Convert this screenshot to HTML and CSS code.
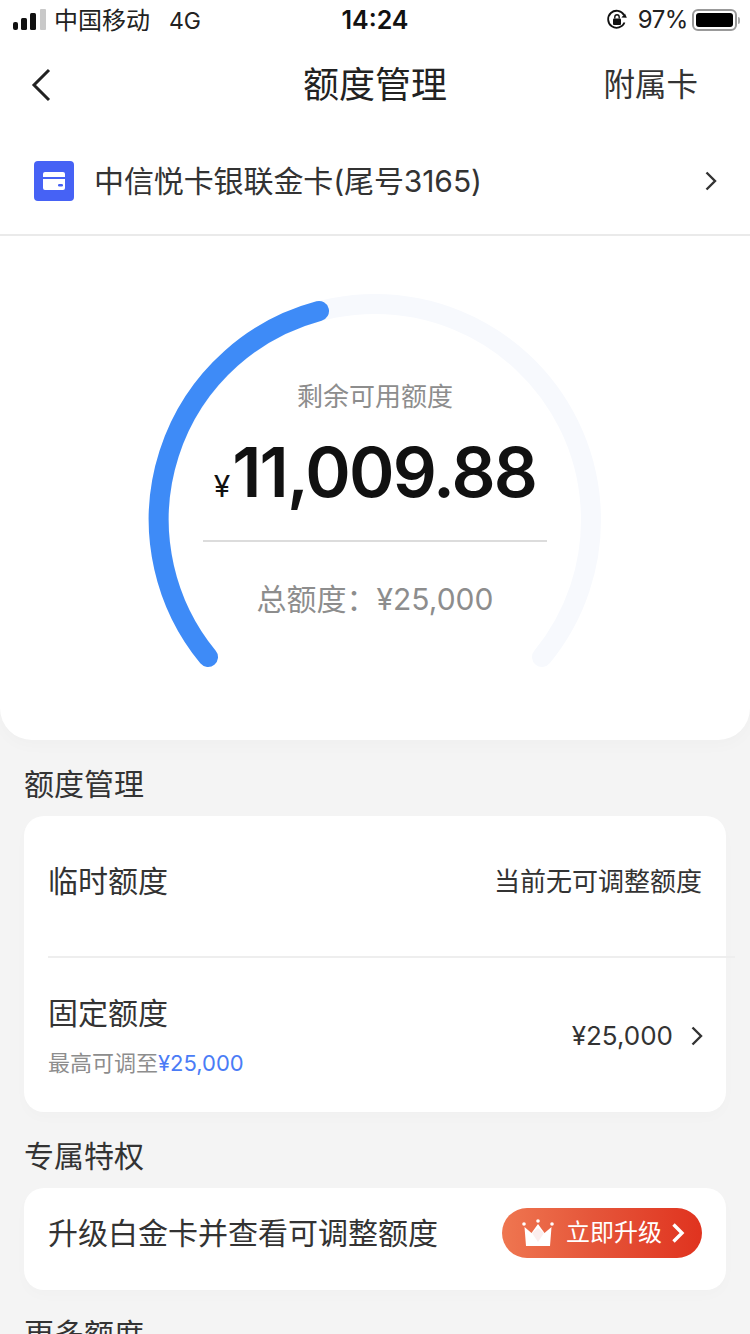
FILE: index.html
```html
<!DOCTYPE html>
<html lang="zh-CN">
<head>
<meta charset="utf-8">
<title>额度管理</title>
<link rel="stylesheet" href="styles.css">
</head>
<body>
<div class="page">
  <section class="hero">
    <div class="status">
      <div class="status-left">
        <svg class="signal" width="34" height="22" viewBox="0 0 34 22"><rect x="1" y="13" width="5" height="8" rx="2" fill="#111"/><rect x="9" y="9" width="6" height="12" rx="1.500" fill="#111"/><rect x="18" y="4" width="6" height="17" rx="1.500" fill="#111"/><rect x="28" y="0" width="6" height="21" rx="1" fill="#c9c9c9"/></svg>
        <span class="carrier">中国移动</span>
        <span class="net">4G</span>
      </div>
      <div class="time">14:24</div>
      <div class="status-right">
        <svg class="lock" width="22" height="22" viewBox="0 0 22 22"><path d="M18.500 13.500A8.500 8.500 0 1 1 18 6" fill="none" stroke="#111" stroke-width="1.800"/><path d="M20.800 8.800l-5.400-.2 3.600-4z" fill="#111"/><rect x="7" y="9.500" width="8" height="6.500" rx="1" fill="#111"/><path d="M8.800 9.500V8a2.200 2.200 0 0 1 4.400 0v1.500" fill="none" stroke="#111" stroke-width="1.400"/></svg>
        <span class="pct">97%</span>
        <span class="battery"><span class="battery-fill"></span></span>
        <span class="battery-cap"></span>
      </div>
    </div>

    <nav class="nav">
      <svg class="back" width="22" height="36" viewBox="0 0 22 36"><path d="M19 3L4 18l15 15" fill="none" stroke="#222" stroke-width="3"/></svg>
      <h1 class="nav-title">额度管理</h1>
      <span class="nav-link">附属卡</span>
    </nav>

    <div class="card-row">
      <svg class="card-icon" width="40" height="40" viewBox="0 0 40 40"><rect width="40" height="40" rx="4" fill="#4662f5"/><path d="M9 13a2 2 0 0 1 2-2h18a2 2 0 0 1 2 2v3H9zM9 18h22v9a2 2 0 0 1-2 2H11a2 2 0 0 1-2-2z" fill="#fff"/><rect x="24" y="23" width="5" height="2.500" rx="1.200" fill="#4662f5"/></svg>
      <span class="card-name">中信悦卡银联金卡(尾号3165)</span>
      <svg class="chev" width="14" height="22" viewBox="0 0 14 22"><path d="M2.500 2.500L11 11l-8.500 8.500" fill="none" stroke="#333" stroke-width="2.400"/></svg>
    </div>

    <div class="gauge">
      <svg class="ring" width="472" height="420" viewBox="0 0 472 420"><path d="M69 367A216 216 0 1 1 403 367" fill="none" stroke="#f7f9fd" stroke-width="20" stroke-linecap="round"/><path d="M69 367A216 216 0 0 1 180 21" fill="none" stroke="#3e8bf7" stroke-width="20" stroke-linecap="round"/></svg>
      <div class="gauge-label">剩余可用额度</div>
      <div class="amount"><span class="amount-sign">¥</span><span class="amount-value">11,009.88</span></div>
      <div class="gauge-rule"></div>
      <div class="gauge-total">总额度：¥25,000</div>
    </div>
  </section>

  <section class="group">
    <h2 class="group-title">额度管理</h2>
    <div class="panel">
      <div class="row row-temp">
        <span class="row-name">临时额度</span>
        <span class="row-note">当前无可调整额度</span>
      </div>
      <div class="row-rule"></div>
      <div class="row row-fixed">
        <div class="row-stack">
          <span class="row-name">固定额度</span>
          <span class="row-sub">最高可调至<em class="row-sub-num">¥25,000</em></span>
        </div>
        <div class="row-end">
          <span class="row-note">¥25,000</span>
          <svg class="chev" width="14" height="22" viewBox="0 0 14 22"><path d="M2.500 2.500L11 11l-8.500 8.500" fill="none" stroke="#333" stroke-width="2.400"/></svg>
        </div>
      </div>
    </div>
  </section>

  <section class="group">
    <h2 class="group-title">专属特权</h2>
    <div class="panel panel-perk">
      <span class="row-name">升级白金卡并查看可调整额度</span>
      <div class="upgrade">
        <svg class="crown" width="34" height="28" viewBox="0 0 34 28"><circle cx="3" cy="5" r="1.800" fill="#fff"/><circle cx="17" cy="2" r="1.800" fill="#fff"/><circle cx="31" cy="5" r="1.800" fill="#fff"/><path d="M3.500 8l7 6L17 5l6.500 9 7-6L29 27H5z" fill="#fff"/><path d="M11 14l6-5 6 5-6 9z" fill="#fbeeee"/></svg>
        <span class="upgrade-text">立即升级</span>
        <svg class="upgrade-chev" width="14" height="22" viewBox="0 0 14 22"><path d="M2.500 2.500L11 11l-8.500 8.500" fill="none" stroke="#fff" stroke-width="3.400"/></svg>
      </div>
    </div>
  </section>

  <section class="group">
    <h2 class="group-title">更多额度</h2>
  </section>
</div>
</body>
</html>
```
FILE: styles.css
```css
* { box-sizing: border-box; }

html, body {
  margin: 0;
  padding: 0;
  height: 1334px;
  overflow: hidden;
  background: #f4f4f4;
}

body {
  font-family: Inter, "Noto Sans CJK SC", sans-serif;
  color: #222;
}

.page {
  width: 750px;
  height: 1334px;
  overflow: hidden;
}

.hero {
  height: 740px;
  background: #fff;
  border-radius: 0 0 32px 32px;
  box-shadow: 0 6px 16px rgba(0, 0, 0, 0.02);
}

/* status bar */
.status {
  height: 40px;
  display: grid;
  grid-template-columns: 1fr auto 1fr;
  align-items: center;
  padding: 0 10px 0 12px;
}

.status-left, .status-right {
  display: flex;
  align-items: center;
}

.status-right { justify-content: flex-end; }

.signal { margin-right: 8px; }

.carrier {
  font-size: 24px;
  line-height: 34px;
  padding-top: 2px;
  color: #222;
  margin-right: 19px;
}

.net { font-size: 23px; line-height: 34px; padding-top: 2px; color: #222; }

.time {
  font-size: 25px;
  line-height: 32px;
  font-weight: 600;
  color: #111;
  transform: translateX(-1px);
}

.lock { margin-right: 10px; }

.pct {
  font-size: 24px;
  line-height: 32px;
  letter-spacing: -0.4px;
  color: #222;
  margin-right: 4px;
}

.battery {
  width: 45px;
  height: 22px;
  padding: 2px;
  border: 2px solid #999;
  border-radius: 6px;
  display: block;
}

.battery-fill {
  display: block;
  height: 100%;
  background: #000;
  border-radius: 3px;
}

.battery-cap {
  width: 2px;
  height: 7px;
  margin-left: 1px;
  background: #aaa;
  border-radius: 0 2px 2px 0;
}

/* navigation */
.nav {
  height: 90px;
  display: grid;
  grid-template-columns: 1fr auto 1fr;
  align-items: center;
  padding: 0 30px;
}

.back { display: block; }

.nav-title {
  margin: 0;
  font-size: 36px;
  font-weight: 400;
  color: #222;
  line-height: 50px;
}

.nav-link {
  justify-self: end;
  margin-right: 22px;
  font-size: 31.5px;
  line-height: 50px;
  color: #333;
}

/* selected card */
.card-row {
  height: 106px;
  display: flex;
  align-items: center;
  padding: 0 32px 2px 34px;
  border-bottom: 2px solid #eaeaea;
}

.card-icon { margin-right: 20px; flex: none; }

.card-name {
  flex: 1;
  font-size: 30px;
  line-height: 42px;
  letter-spacing: -0.1px;
  color: #333;
}

.chev { display: block; flex: none; }

/* credit gauge */
.gauge {
  position: relative;
  width: 472px;
  height: 504px;
  margin: 0 auto;
  display: flex;
  flex-direction: column;
  align-items: center;
  padding-top: 141px;
}

.ring {
  position: absolute;
  left: 0;
  top: 54px;
}

.gauge-label {
  position: relative;
  font-size: 26px;
  line-height: 40px;
  color: #8d8d8d;
}

.amount {
  position: relative;
  display: flex;
  align-items: baseline;
  height: 92px;
  margin-top: 9px;
}

.amount-sign {
  font-size: 30px;
  color: #111;
  margin-right: 2px;
}

.amount-value {
  font-size: 69px;
  font-weight: 600;
  line-height: 92px;
  color: #111;
  letter-spacing: -1.800px;
}

.gauge-rule {
  position: relative;
  width: 344px;
  height: 2px;
  margin-top: 22px;
  background: #dcdcdc;
}

.gauge-total {
  position: relative;
  margin-top: 35px;
  font-size: 30px;
  line-height: 44px;
  color: #8d8d8d;
}

/* grouped sections */
.group { padding: 0 24px; }

.group-title {
  margin: 0;
  padding-top: 23px;
  height: 76px;
  font-size: 30px;
  font-weight: 400;
  line-height: 42px;
  color: #333;
}

.panel {
  background: #fff;
  border-radius: 20px;
  box-shadow: 0 6px 14px rgba(0, 0, 0, 0.015);
}

.row {
  display: flex;
  justify-content: space-between;
  padding: 0 24px;
}

.row-temp {
  height: 140px;
  padding-top: 44px;
  align-items: flex-start;
}

.row-temp .row-note { margin-top: 1px; }

.row-fixed {
  height: 154px;
  align-items: center;
}

.row-rule {
  height: 2px;
  margin: 0 -9px 0 24px;
  background: #eeeeee;
}

.row-name {
  font-size: 30px;
  line-height: 42px;
  color: #333;
}

.row-note {
  font-size: 26px;
  line-height: 42px;
  color: #333;
}

.row-stack {
  display: flex;
  flex-direction: column;
  gap: 13px;
}

.row-sub {
  font-size: 22px;
  line-height: 32px;
  color: #8d8d8d;
}

.row-sub-num {
  font-style: normal;
  color: #4a7cf6;
}

.row-end {
  display: flex;
  align-items: center;
  gap: 17px;
  margin: 2px -2px 0 0;
}

.panel-perk {
  height: 102px;
  display: flex;
  align-items: center;
  justify-content: space-between;
  padding: 0 24px 12px;
}

.upgrade {
  width: 200px;
  height: 50px;
  display: flex;
  align-items: center;
  padding-left: 19px;
  border-radius: 25px;
  background: linear-gradient(90deg, #ef7650 0%, #e5563a 45%, #e0331f 100%);
}

.crown { margin-right: 11px; flex: none; }

.upgrade-text {
  font-size: 24px;
  line-height: 34px;
  color: #fff;
  margin-right: 9px;
}
```
